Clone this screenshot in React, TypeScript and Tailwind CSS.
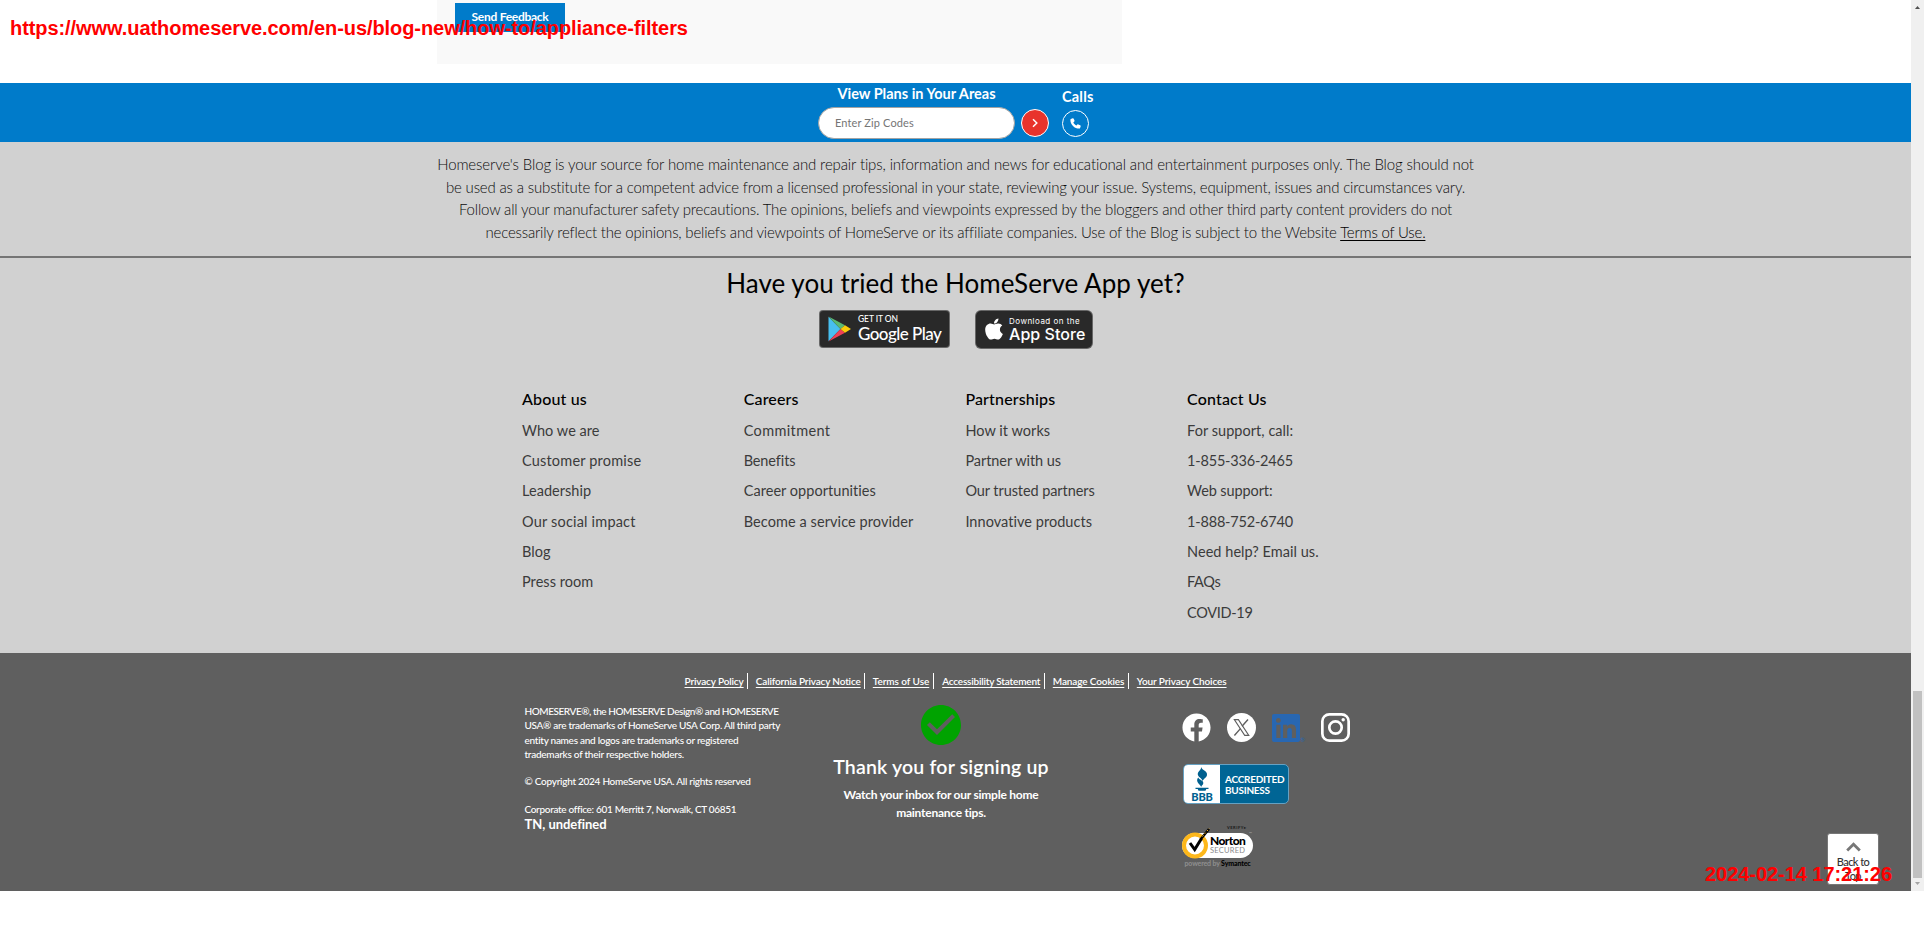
import type { ReactNode } from "react";
import { FaApple, FaFacebook, FaLinkedin, FaPhoneAlt } from "react-icons/fa";
import { MdCheckCircle } from "react-icons/md";

const disclaimer = [
  {
    text: "Homeserve's Blog is your source for home maintenance and repair tips, information and news for educational and entertainment purposes only. The Blog should not",
    cls: "tracking-[-0.123px]",
  },
  {
    text: "be used as a substitute for a competent advice from a licensed professional in your state, reviewing your issue. Systems, equipment, issues and circumstances vary.",
    cls: "tracking-[-0.163px]",
  },
  {
    text: "Follow all your manufacturer safety precautions. The opinions, beliefs and viewpoints expressed by the bloggers and other third party content providers do not",
    cls: "tracking-[-0.166px]",
  },
];

const columns = [
  {
    title: "About us",
    links: ["Who we are", "Customer promise", "Leadership", "Our social impact", "Blog", "Press room"],
  },
  {
    title: "Careers",
    links: ["Commitment", "Benefits", "Career opportunities", "Become a service provider"],
  },
  {
    title: "Partnerships",
    links: ["How it works", "Partner with us", "Our trusted partners", "Innovative products"],
  },
  {
    title: "Contact Us",
    links: ["For support, call:", "1-855-336-2465", "Web support:", "1-888-752-6740", "Need help? Email us.", "FAQs", "COVID-19"],
  },
];

const linkTracking: Record<string, string> = {
  "Customer promise": "tracking-[0.19px]",
  "Our social impact": "tracking-[0.19px]",
  Commitment: "tracking-[0.36px]",
  Benefits: "tracking-[-0.12px]",
  "Become a service provider": "tracking-[0.08px]",
  "Partner with us": "tracking-[-0.06px]",
  "Our trusted partners": "tracking-[-0.08px]",
  "1-855-336-2465": "tracking-[-0.2px]",
  "1-888-752-6740": "tracking-[-0.2px]",
  "Web support:": "tracking-[-0.1px]",
  FAQs: "tracking-[-0.3px]",
  "COVID-19": "tracking-[-0.3px]",
};

const policies = [
  { label: "Privacy Policy", cls: "tracking-[-0.14px] w-[62.3px]" },
  { label: "California Privacy Notice", cls: "tracking-[-0.16px] w-[108px]" },
  { label: "Terms of Use", cls: "tracking-[-0.06px] w-[60.4px]" },
  { label: "Accessibility Statement", cls: "tracking-[-0.19px] w-[101.6px]" },
  { label: "Manage Cookies", cls: "tracking-[-0.12px] w-[75px]" },
  { label: "Your Privacy Choices", cls: "tracking-[-0.11px] w-[91px]" },
];

function FeedbackPanel() {
  return (
    <div className="h-[83px] pl-[437px]">
      <div className="h-16 w-[685px] bg-[#f9f9f9] pl-[18px] pt-[3px]">
        <button className="block h-[29px] w-[110px] bg-[#007bca] pb-px text-center text-[12px] font-bold tracking-[-0.27px] text-white">
          Send Feedback
        </button>
      </div>
    </div>
  );
}

function PlansBar() {
  return (
    <div className="flex h-[59px] bg-[#007bca] pl-[818px] text-white">
      <div className="w-[197px]">
        <div className="mt-[1.5px] h-[19.5px] text-center text-[14.5px] font-bold leading-[18px]">
          View Plans in Your Areas
        </div>
        <div className="mt-[3px] flex h-8 items-center rounded-full border border-[#a3a3a3] bg-white pl-4 text-[11px] tracking-[0.13px] text-[#757575]">
          Enter Zip Codes
        </div>
      </div>
      <button className="ml-[6px] mt-[26px] flex size-7 items-center justify-center rounded-full border border-white bg-[#e8332c]">
        <svg width="8" height="10" viewBox="0 0 8 10" fill="none" stroke="white" strokeWidth="1.5">
          <path d="M2 1.2 5.8 5 2 8.8" />
        </svg>
      </button>
      <div className="ml-[13px] mt-[4.5px]">
        <div className="h-[21.5px] text-[14.5px] font-bold leading-[18px] tracking-[0.2px]">Calls</div>
        <button className="mt-px flex size-[27px] items-center justify-center rounded-full border border-white">
          <svg width="11" height="11" viewBox="0 0 11 11" fill="white">
            <path d="M0.9 1.1 2.700.3c.4-.2.8 0 1 .4l.8 1.900c.1.300 0 .7-.2.900l-1 .9c.7 1.400 1.800 2.500 3.200 3.200l.9-1c.2-.3.6-.4.9-.2l1.900.8c.4.200.6.600.500 1l-.6 1.800c-.1.400-.4.600-.8.600C4.500 10.600.4 6.500.4 1.900c0-.4.200-.7.5-.8z" />
          </svg>
        </button>
      </div>
    </div>
  );
}

function GooglePlayBadge() {
  return (
    <div className="flex h-[38px] w-[131px] rounded-[4px] border border-[#a6a6a6]/50 bg-[#292929] text-white">
      <svg className="ml-2 mt-[5px]" width="23" height="26" viewBox="0 0 23 26">
        <path d="M0.5 0.8v24.4L12.5 13z" fill="#48bff0" />
        <path d="M0.5 0.5 17 9.2 12.5 13z" fill="#5bb974" />
        <path d="M0.5 25.5 17 16.8 12.5 13z" fill="#ee4056" />
        <path d="M17 9.2 23 13l-6 3.8L12.5 13z" fill="#fbcb0a" />
      </svg>
      <div className="ml-[7px] pt-[3px]">
        <div className="text-[8.5px] font-medium leading-[11px] tracking-[-0.1px]">GET IT ON</div>
        <div className="whitespace-nowrap text-[17px] font-medium leading-[18px] tracking-[-0.55px]">Google Play</div>
      </div>
    </div>
  );
}

function AppStoreBadge() {
  return (
    <div className="flex h-[39px] w-[118px] rounded-[6px] border border-[#a6a6a6]/50 bg-[#292929] text-white">
      <FaApple className="ml-[6px] mt-[6px]" size={24} />
      <div className="ml-[3px] whitespace-nowrap pt-[5px] font-[Inter]">
        <div className="text-[8px] leading-[11px] tracking-[0.48px]">Download on the</div>
        <div className="text-[16px] font-medium leading-[15px] tracking-[0.05px]">App Store</div>
      </div>
    </div>
  );
}

function LightFooter() {
  return (
    <div className="h-[511px] bg-[#d1d1d1]">
      <div className="h-[116px] border-b-2 border-[#757575] pt-[11.3px] text-center text-[15px] font-light leading-[22.4px] text-[#0c0c0c]">
        {disclaimer.map((line) => (
          <p key={line.text} className={line.cls}>
            {line.text}
          </p>
        ))}
        <p className="tracking-[-0.195px]">
          necessarily reflect the opinions, beliefs and viewpoints of HomeServe or its affiliate companies. Use of the
          Blog is subject to the Website <a className="text-black underline underline-offset-2">Terms of Use.</a>
        </p>
      </div>
      <h2 className="mt-[10px] h-[32px] text-center text-[26px] leading-[30px] tracking-[0.04px] text-black">
        Have you tried the HomeServe App yet?
      </h2>
      <div className="mt-[10px] flex h-[39px] gap-[25px] pl-[819px]">
        <GooglePlayBadge />
        <AppStoreBadge />
      </div>
      <div className="mt-[40px] grid grid-cols-[repeat(4,221.7px)] pl-[522px]">
        {columns.map((column) => (
          <div key={column.title}>
            <h3 className="h-[26.8px] text-[16px] font-medium leading-[20px] tracking-[0.15px] text-black">{column.title}</h3>
            {column.links.map((link) => (
              <a
                key={link}
                className={
                  "block h-[30.3px] text-[14.5px] leading-[30.3px] text-[#3b3b3b] " +
                  (linkTracking[link] ?? "tracking-[0.04px]")
                }
              >
                {link}
              </a>
            ))}
          </div>
        ))}
      </div>
    </div>
  );
}

function PolicyLinks() {
  return (
    <div className="flex h-[16px] pl-[684.5px]">
      {policies.map((p, i) => (
        <a
          key={p.label}
          className={
            "box-content whitespace-nowrap text-[10px] font-semibold leading-[16px] underline underline-offset-[1.5px] " +
            (i < policies.length - 1 ? "mr-[8px] border-r border-white " : "") +
            p.cls
          }
        >
          {p.label}
        </a>
      ))}
    </div>
  );
}

function Legal() {
  return (
    <div className="w-[280px] whitespace-nowrap pt-[15px] text-[10px] font-medium leading-[14.4px]">
      <p className="tracking-[-0.44px]">HOMESERVE®, the HOMESERVE Design® and HOMESERVE</p>
      <p className="tracking-[-0.285px]">USA® are trademarks of HomeServe USA Corp. All third party</p>
      <p className="tracking-[-0.27px]">entity names and logos are trademarks or registered</p>
      <p className="tracking-[-0.25px]">trademarks of their respective holders.</p>
      <p className="mt-[12.5px] tracking-[-0.27px]">© Copyright 2024 HomeServe USA. All rights reserved</p>
      <p className="mt-[13.5px] tracking-[-0.32px]">Corporate office: 601 Merritt 7, Norwalk, CT 06851</p>
      <p className="mt-px text-[13px] font-bold leading-[15px] tracking-[-0.03px]">TN, undefined</p>
    </div>
  );
}

function SignupConfirmation() {
  return (
    <div className="flex w-[240px] flex-col items-center pt-[12px] text-center">
      <MdCheckCircle size={48} color="#00a300" />
      <h2 className="mt-[5px] text-[19.5px] font-semibold leading-[26px] tracking-[0.18px]">Thank you for signing up</h2>
      <p className="mt-[6px] text-[12px] font-bold leading-[18px] tracking-[-0.24px]">
        Watch your inbox for our simple home
        <br />
        maintenance tips.
      </p>
    </div>
  );
}

function XLogo() {
  return (
    <svg width="29" height="29" viewBox="0 0 29 29">
      <circle cx="14.5" cy="14.5" r="14.5" fill="white" />
      <g fill="none" stroke="#5f5f5f" strokeWidth="1.1">
        <path d="M7.3 6.6h4.1l10.4 15.8h-4.1z" />
        <path d="M21 6.5l-6 6.7M13.4 15.6 7.4 22.5" strokeWidth="1.4" />
      </g>
    </svg>
  );
}

function InstagramLogo() {
  return (
    <svg width="29" height="29" viewBox="0 0 29 29" fill="none" stroke="white" strokeWidth="2.7">
      <rect x="1.35" y="1.35" width="26.3" height="26.3" rx="7" />
      <circle cx="14.5" cy="14.5" r="6.2" />
      <circle cx="22.2" cy="6.8" r="1.7" fill="white" stroke="none" />
    </svg>
  );
}

function BbbBadge() {
  return (
    <div className="flex h-10 w-[106px] overflow-hidden rounded-[5px] border border-[#66a1c2] bg-[#006595]">
      <div className="flex w-[36px] flex-col items-center bg-white pt-[2px] text-[#00608f]">
        <svg width="18" height="26" viewBox="0 0 18 26" fill="currentColor">
          <path d="M8.2 0c1 3.6 6.4 3.6 5.8 8-.4 2.8-3.4 3.4-4.4 6.2C9.4 10.9 4.2 10.3 4.8 6.5 5.2 4 8.2 3.2 8.2 0z" />
          <path d="M5.2 10.5c1.4 2.7 6 3.1 5 6.3-.5 1.4-1.6 1.7-2 3.2C7.4 17.2 1.8 15 5.2 10.5z" />
          <path d="M2.5 20.8h13v1.3h-2.2l-.8 1.7h-7l-.8-1.7H2.5z" />
        </svg>
        <div className="-mt-[1px] text-[11px] font-black leading-[10px] tracking-[-0.1px]">BBB</div>
      </div>
      <div className="whitespace-nowrap pl-[5px] pt-[9px] text-[10px] font-bold leading-[11px] tracking-[-0.27px] text-white">
        ACCREDITED
        <br />
        BUSINESS
      </div>
    </div>
  );
}

function NortonBadge() {
  return (
    <div className="relative mt-[21px] h-[44px] w-[76px] pt-[8px]">
      <div className="absolute left-[45px] top-0 whitespace-nowrap text-[4px] font-black leading-[6px] tracking-[0.5px] text-[#1c1c1c]">
        VERIFY▸
      </div>
      <div className="h-[25px] w-[71px] rounded-full bg-white pl-[28px] pt-[2px]">
        <div className="text-[12px] font-black leading-[12px] tracking-[-0.6px] text-black">Norton</div>
        <div className="text-[7.5px] leading-[8px] tracking-[0.25px] text-[#8b8b8b]">SECURED</div>
      </div>
      <svg className="absolute left-0 top-0" width="30" height="36" viewBox="0 0 30 36" fill="none">
        <circle cx="13" cy="20.5" r="11" fill="white" stroke="#fdb71a" strokeWidth="4" />
        <path d="M8 18l4.7 6.6L19.5 13.5" stroke="black" strokeWidth="3" />
        <path d="M18.5 14.5l8.5-10.5" stroke="black" strokeWidth="2.4" />
        <path d="M20.5 11.5l7-8.5" stroke="#fdb71a" strokeWidth="1" strokeDasharray="1.5 2" />
      </svg>
      <div className="absolute left-[2.5px] top-[34px] whitespace-nowrap text-[7px] font-bold leading-[8px] tracking-[-0.15px] text-[#8f8f8f]">
        powered by <span className="font-black text-black">Symantec</span>
      </div>
      <span className="absolute left-[67px] top-[6px] text-[4px] leading-[5px] text-[#aaa]">™</span>
    </div>
  );
}

function Badges() {
  return (
    <div className="ml-[121px] w-[200px] pt-[24px]">
      <div className="flex h-[29px]">
        <FaFacebook size={29} />
        <span className="ml-4">
          <XLogo />
        </span>
        <span className="ml-[14px]">
          <FaLinkedin size={32} color="#2867b2" className="-mt-[1.5px]" />
        </span>
        <span className="-ml-[2px] mt-[22px] w-[21px] text-[6px] leading-[10px] text-[#2867b2]">®</span>
        <InstagramLogo />
      </div>
      <div className="ml-px mt-[22px]">
        <BbbBadge />
      </div>
      <NortonBadge />
    </div>
  );
}

function DarkFooter() {
  return (
    <div className="h-[238px] bg-[#5f5f5f] pt-[20px] text-white">
      <PolicyLinks />
      <div className="flex pl-[524.5px]">
        <Legal />
        <div className="ml-[16.5px]">
          <SignupConfirmation />
        </div>
        <Badges />
      </div>
    </div>
  );
}

function Scrollbar() {
  return (
    <div className="flex h-[891px] w-[13px] flex-col items-center bg-[#f0f0f0]">
      <svg className="mt-[6px]" width="5" height="3" viewBox="0 0 5 3" fill="#505050">
        <path d="M0 3h5L2.5 0z" />
      </svg>
      <div className="mt-[682px] h-[187px] w-[9px] bg-[#c1c1c1]" />
      <svg className="mt-[4px]" width="5" height="3" viewBox="0 0 5 3" fill="#a3a3a3">
        <path d="M0 0h5L2.5 3z" />
      </svg>
    </div>
  );
}

function Stamp({ children, className }: { children: ReactNode; className: string }) {
  return (
    <div
      className={
        "absolute whitespace-nowrap font-['Liberation_Sans',Arial,sans-serif] text-[20px] font-bold leading-[24px] text-[#ff0000] " +
        className
      }
    >
      {children}
    </div>
  );
}

export default function App() {
  return (
    <div className="relative flex h-[941px] w-[1924px] overflow-hidden bg-white font-[Lato,sans-serif]">
      <main className="w-[1911px]">
        <FeedbackPanel />
        <PlansBar />
        <LightFooter />
        <DarkFooter />
      </main>
      <Scrollbar />
      <button className="absolute left-[1827px] top-[833px] flex h-[52px] w-[52px] flex-col items-center rounded-[3px] border border-[#777] bg-white text-[11px] font-medium leading-[14px] tracking-[-0.55px] text-[#333]">
        <svg className="mb-[3px] mt-[8px]" width="15" height="10" viewBox="0 0 15 10" fill="none" stroke="#777" strokeWidth="2.8">
          <path d="M1.2 8.5 7.5 2.2l6.3 6.3" />
        </svg>
        Back to
        <br />
        Top
      </button>
      <Stamp className="left-[10px] top-[16px] tracking-[-0.07px]">
        https://www.uathomeserve.com/en-us/blog-new/how-to/appliance-filters
      </Stamp>
      <Stamp className="left-[1705px] top-[862px] tracking-[-0.05px]">2024-02-14 17:21:26</Stamp>
    </div>
  );
}
